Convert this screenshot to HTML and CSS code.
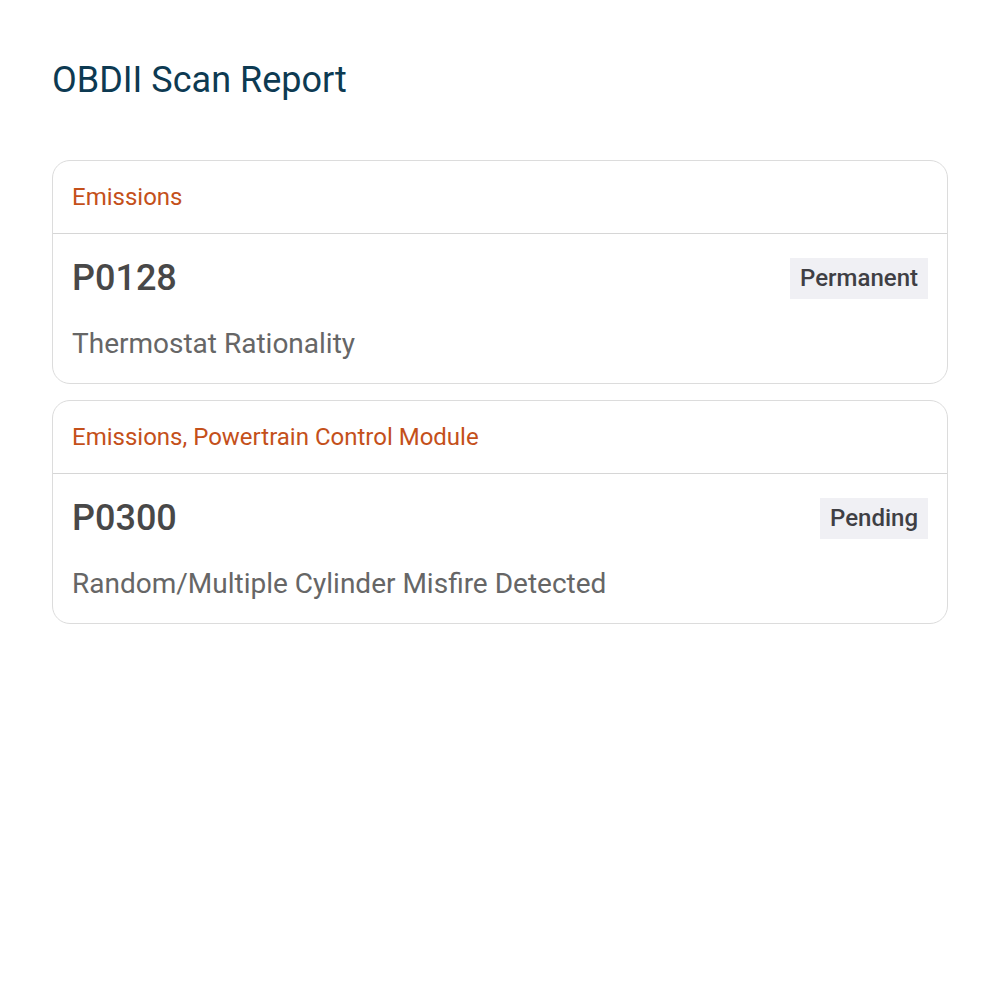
FILE: index.html
```html
<!DOCTYPE html>
<html>
<head>
<meta charset="utf-8">
<link rel="stylesheet" href="styles.css">
</head>
<body>
<div class="page">
  <h1 class="title">OBDII Scan Report</h1>
  <div class="list">
    <div class="card">
      <div class="card-head">Emissions</div>
      <div class="card-body">
        <div class="row">
          <span class="code">P0128</span>
          <span class="badge">Permanent</span>
        </div>
        <div class="desc">Thermostat Rationality</div>
      </div>
    </div>
    <div class="card">
      <div class="card-head">Emissions, Powertrain Control Module</div>
      <div class="card-body">
        <div class="row">
          <span class="code">P0300</span>
          <span class="badge">Pending</span>
        </div>
        <div class="desc">Random/Multiple Cylinder Misfire Detected</div>
      </div>
    </div>
  </div>
</div>
</body>
</html>
```
FILE: styles.css
```css
* { box-sizing: border-box; }
html, body { margin: 0; padding: 0; background: #fff; }
body { font-family: Roboto, "Noto Sans", sans-serif; }
.page { padding: 56px 52px; }
.title {
  margin: 0 0 56px 0;
  font-size: 36px;
  font-weight: 400;
  color: #0d3a52;
  line-height: 48px;
}
.list { display: flex; flex-direction: column; gap: 16px; }
.card {
  border: 1px solid #dcdcdc;
  border-radius: 18px;
  overflow: hidden;
}
.card-head {
  height: 73px;
  display: flex;
  align-items: center;
  padding: 0 19px;
  font-size: 24px;
  color: #c4501a;
  border-bottom: 1px solid #d6d6d6;
}
.card-body { padding: 24px 19px 23px 19px; }
.row { display: flex; justify-content: space-between; align-items: center; }
.code { font-size: 36px; font-weight: 500; color: #484848; line-height: 41px; }
.badge {
  background: #f0f0f4;
  color: #3f3f44;
  font-size: 24px;
  font-weight: 500;
  padding: 0 10px;
  height: 41px;
  line-height: 41px;
}
.desc { font-size: 28px; color: #666; margin-top: 28px; line-height: 33px; }
```
